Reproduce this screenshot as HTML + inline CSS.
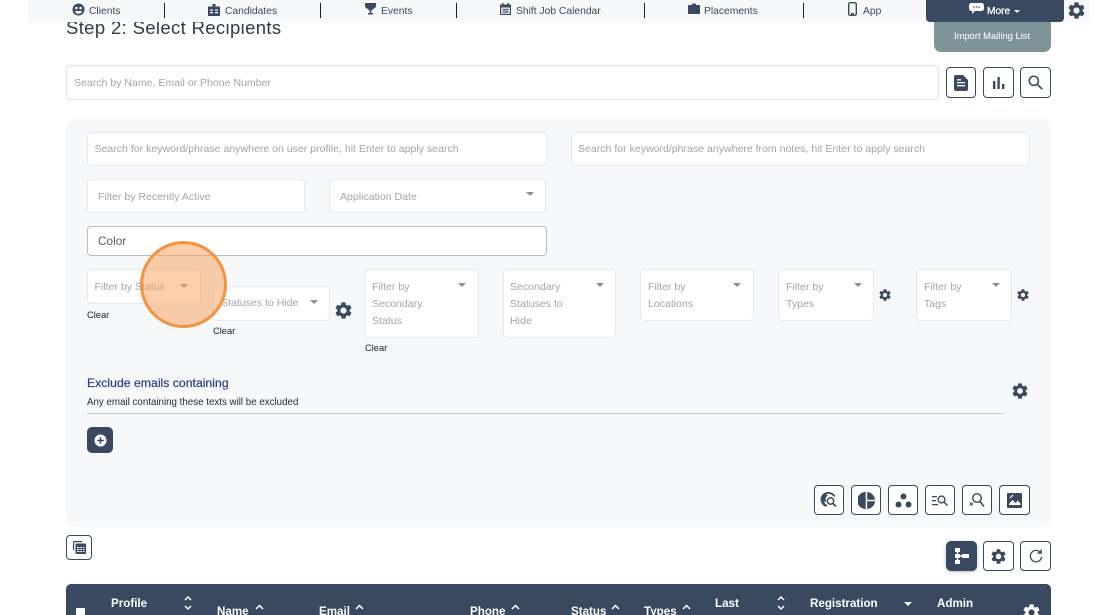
<!DOCTYPE html>
<html><head><meta charset="utf-8">
<style>
*{box-sizing:border-box}
html,body{margin:0;padding:0;background:#fff;width:1100px;height:615px;overflow:hidden}
body{position:relative;font-family:"Liberation Sans",sans-serif;color:#39495f}
.a{position:absolute}
.t{position:absolute;white-space:nowrap;line-height:14px}
.in{position:absolute;background:#fff;border:1px solid #e6e9ee;border-radius:4px}
.p{color:#a0a4a9;font-size:10.55px}
.btn{position:absolute;background:#fff;border:1px solid #39495f;border-radius:4px;display:flex;align-items:center;justify-content:center}
.caret{position:absolute;width:0;height:0;border-left:4.5px solid transparent;border-right:4.5px solid transparent;border-top:4.5px solid #8a8f96}
.sep{position:absolute;top:3px;width:1px;height:15px;background:#222}
.n{font-size:10.3px;color:#39495f;top:5px}
.c{font-size:9.3px;color:#222}
.h{font-size:11.6px;font-weight:bold;color:#fff}
svg{display:block}
</style></head><body>
<svg width="0" height="0" style="position:absolute"><defs>
<symbol id="g" viewBox="2 2 20 20"><path d="M19.14 12.94c.04-.3.06-.61.06-.94 0-.32-.02-.64-.07-.94l2.03-1.58a.49.49 0 0 0 .12-.61l-1.92-3.32a.488.488 0 0 0-.59-.22l-2.39.96c-.5-.38-1.03-.7-1.62-.94l-.36-2.54a.484.484 0 0 0-.48-.41h-3.84c-.24 0-.43.17-.47.41l-.36 2.54c-.59.24-1.13.57-1.62.94l-2.39-.96c-.22-.08-.47 0-.59.22L2.74 8.87c-.12.21-.08.47.12.61l2.03 1.58c-.05.3-.09.63-.09.94s.02.64.07.94l-2.03 1.58a.49.49 0 0 0-.12.61l1.92 3.32c.12.22.37.29.59.22l2.39-.96c.5.38 1.03.7 1.62.94l.36 2.54c.05.24.24.41.48.41h3.84c.24 0 .44-.17.47-.41l.36-2.54c.59-.24 1.13-.56 1.62-.94l2.39.96c.22.08.47 0 .59-.22l1.92-3.32c.12-.22.07-.47-.12-.61l-2.01-1.58zM12 15.6c-1.98 0-3.6-1.62-3.6-3.6s1.62-3.6 3.6-3.6 3.6 1.62 3.6 3.6-1.62 3.6-3.6 3.6z" fill="currentColor"/></symbol>
</defs></svg>

<div class="t" style="left:66px;top:17px;font-size:18.5px;line-height:22px;color:#2f3a47;letter-spacing:.35px">Step 2: Select Recipients</div>

<!-- nav -->
<div class="a" style="left:28px;top:0;width:1062px;height:22px;background:#f6f8fa"></div>
<svg class="a" style="left:72px;top:3px" width="13" height="13" viewBox="0 0 13 13"><circle cx="6.500" cy="6.500" r="6" fill="#39495f"/><circle cx="4.400" cy="5" r="1.300" fill="#f6f8fa"/><circle cx="8.600" cy="5" r="1.300" fill="#f6f8fa"/><path d="M3 8h7a3.600 3.600 0 0 1-7 0z" fill="#f6f8fa"/></svg>
<div class="t n" style="left:89px">Clients</div>
<div class="sep" style="left:164px"></div>
<svg class="a" style="left:208px;top:3px" width="12" height="13" viewBox="0 0 12 13"><path d="M0 3.500h4.500V1h3v2.500H12V13H0z" fill="#39495f"/><rect x="2" y="6.500" width="3" height="1.300" fill="#f6f8fa"/><rect x="7" y="6.500" width="3" height="1.300" fill="#f6f8fa"/><rect x="2" y="9" width="3" height="1.300" fill="#f6f8fa"/><rect x="7" y="9" width="3" height="1.300" fill="#f6f8fa"/></svg>
<div class="t n" style="left:225px">Candidates</div>
<div class="sep" style="left:320px"></div>
<svg class="a" style="left:365px;top:3px" width="11" height="12" viewBox="0 0 11 12"><path d="M0 0h11v2.500C11 4.500 9.500 5.500 8 6 7.500 7 6.500 7.500 6.200 7.800V10H8v1.500H3V10h1.800V7.800C4.500 7.500 3.500 7 3 6 1.500 5.500 0 4.500 0 2.500z" fill="#39495f"/></svg>
<div class="t n" style="left:381px">Events</div>
<div class="sep" style="left:456px"></div>
<svg class="a" style="left:500px;top:3px" width="11" height="12" viewBox="0 0 11 12"><path d="M0 1.500h2V0h1.500v1.500h4V0H9v1.500h2V12H0z" fill="#39495f"/><rect x="1.200" y="4.500" width="8.600" height="6.300" fill="#f6f8fa"/><path d="M2.500 5.800h6v1h-6zM2.500 7.500h6v1h-6zM2.500 9.100h6v.8h-6z" fill="#39495f"/></svg>
<div class="t n" style="left:516px">Shift Job Calendar</div>
<div class="sep" style="left:644px"></div>
<svg class="a" style="left:688px;top:3px" width="12" height="11" viewBox="0 0 12 11"><path d="M1 2h3V.6h4V2h3a1 1 0 0 1 1 1v7a1 1 0 0 1-1 1H1a1 1 0 0 1-1-1V3a1 1 0 0 1 1-1z" fill="#39495f"/></svg>
<div class="t n" style="left:704px">Placements</div>
<div class="sep" style="left:803px"></div>
<svg class="a" style="left:848px;top:2px" width="9" height="14" viewBox="0 0 9 14"><rect x=".7" y=".7" width="7.600" height="12.600" rx="1.500" fill="none" stroke="#39495f" stroke-width="1.400"/><rect x="3" y="11" width="3" height="1.500" fill="#39495f"/></svg>
<div class="t n" style="left:863px">App</div>

<div class="a" style="left:934px;top:20px;width:117px;height:32px;background:#7f9498;border-radius:0 0 7px 7px"></div>
<div class="t" style="left:954px;top:29px;font-size:9.400px;color:#fff">Import Mailing List</div>
<div class="a" style="left:926px;top:0;width:138px;height:22px;background:#39495f;border-radius:0 0 4px 4px"></div>
<svg class="a" style="left:969px;top:3px" width="15" height="11" viewBox="0 0 15 11"><path d="M2.500 0h10A2.500 2.500 0 0 1 15 2.500v3A2.500 2.500 0 0 1 12.500 8H6l-3 3V8h-.5A2.500 2.500 0 0 1 0 5.500v-3A2.500 2.500 0 0 1 2.500 0z" fill="#fff"/><circle cx="5" cy="4" r=".8" fill="#39495f"/><circle cx="7.500" cy="4" r=".8" fill="#39495f"/><circle cx="10" cy="4" r=".8" fill="#39495f"/></svg>
<div class="t" style="left:987px;top:5px;font-size:10.200px;color:#fff;-webkit-text-stroke:.25px #fff">More</div>
<div class="caret" style="left:1014px;top:10px;border-top-color:#fff;border-left-width:3px;border-right-width:3px;border-top-width:3px"></div>
<svg class="a" style="left:1068px;top:2px;color:#39495f" width="17" height="17"><use href="#g"/></svg>

<!-- search -->
<div class="in" style="left:66px;top:65px;width:873px;height:35px;border-color:#dfe2e6"></div>
<div class="t p" style="left:74px;top:76px">Search by Name, Email or Phone Number</div>
<div class="btn" style="left:946px;top:67px;width:30px;height:31px"><svg width="14" height="16" viewBox="0 0 14 16"><path d="M2 0h7l5 5v9a2 2 0 0 1-2 2H2a2 2 0 0 1-2-2V2a2 2 0 0 1 2-2z" fill="#39495f"/><path d="M3 7h8v1.400H3zM3 10h8v1.400H3zM3 4.200h4v1.300H3z" fill="#fff"/></svg></div>
<div class="btn" style="left:983px;top:67px;width:31px;height:31px"><svg width="12" height="12" viewBox="0 0 12 12"><path d="M0 4h2.400v8H0zM4.400 0h2.400v12H4.400zM9 7h2.400v5H9z" fill="#39495f"/></svg></div>
<div class="btn" style="left:1020px;top:67px;width:31px;height:31px"><svg width="15" height="15" viewBox="0 0 15 15"><circle cx="5.800" cy="5.800" r="4.600" fill="none" stroke="#39495f" stroke-width="1.500"/><path d="M9.200 9.200l5 5" stroke="#39495f" stroke-width="1.700"/></svg></div>

<!-- panel -->
<div class="a" style="left:66px;top:119px;width:985px;height:408px;background:#f6f8fa;border-radius:10px"></div>
<div class="in" style="left:87px;top:132px;width:460px;height:34px"></div>
<div class="t p" style="left:94.500px;top:142px">Search for keyword/phrase anywhere on user profile, hit Enter to apply search</div>
<div class="in" style="left:571px;top:132px;width:459px;height:34px"></div>
<div class="t p" style="left:578px;top:142px">Search for keyword/phrase anywhere from notes, hit Enter to apply search</div>
<div class="in" style="left:87px;top:179px;width:218px;height:34px"></div>
<div class="t p" style="left:98px;top:190px">Filter by Recently Active</div>
<div class="in" style="left:329px;top:179px;width:217px;height:34px"></div>
<div class="t p" style="left:340px;top:190px">Application Date</div>
<div class="caret" style="left:526px;top:192px"></div>
<div class="in" style="left:87px;top:226px;width:460px;height:30px;border-color:#b9bec6"></div>
<div class="t" style="left:98px;top:234px;font-size:11.800px;color:#555c66">Color</div>

<div class="in" style="left:87px;top:269px;width:114px;height:35px"></div>
<div class="t p" style="left:94.500px;top:280px">Filter by Status</div>
<div class="caret" style="left:180px;top:284px"></div>
<div class="t c" style="left:87px;top:307.500px">Clear</div>

<div class="in" style="left:213px;top:286px;width:117px;height:35px"></div>
<div class="t p" style="left:221px;top:296px">Statuses to Hide</div>
<div class="caret" style="left:310px;top:300px"></div>
<div class="t c" style="left:213px;top:323.500px">Clear</div>
<svg class="a" style="left:335px;top:302px;color:#39495f" width="17" height="17"><use href="#g"/></svg>

<div class="in" style="left:365px;top:269px;width:114px;height:69px"></div>
<div class="t p" style="left:372px;top:279px;line-height:17px">Filter by<br>Secondary<br>Status</div>
<div class="caret" style="left:458px;top:283px"></div>
<div class="t c" style="left:365px;top:340.500px">Clear</div>

<div class="in" style="left:503px;top:269px;width:113px;height:69px"></div>
<div class="t p" style="left:510px;top:279px;line-height:17px">Secondary<br>Statuses to<br>Hide</div>
<div class="caret" style="left:596px;top:283px"></div>

<div class="in" style="left:640px;top:269px;width:114px;height:52px"></div>
<div class="t p" style="left:648px;top:279px;line-height:17px">Filter by<br>Locations</div>
<div class="caret" style="left:733px;top:283px"></div>

<div class="in" style="left:778px;top:269px;width:96px;height:52px"></div>
<div class="t p" style="left:786px;top:279px;line-height:17px">Filter by<br>Types</div>
<div class="caret" style="left:854px;top:283px"></div>
<svg class="a" style="left:879px;top:289px;color:#39495f" width="12" height="12"><use href="#g"/></svg>

<div class="in" style="left:916px;top:269px;width:96px;height:52px"></div>
<div class="t p" style="left:924px;top:279px;line-height:17px">Filter by<br>Tags</div>
<div class="caret" style="left:992px;top:283px"></div>
<svg class="a" style="left:1017px;top:289px;color:#39495f" width="12" height="12"><use href="#g"/></svg>

<div class="t" style="left:87px;top:376px;font-size:12.250px;color:#2b3f86;-webkit-text-stroke:.2px #2b3f86">Exclude emails containing</div>
<div class="t" style="left:87px;top:396px;font-size:9.750px;color:#2a2f36">Any email containing these texts will be excluded</div>
<div class="a" style="left:87px;top:413px;width:917px;height:1px;background:#c4c8ce"></div>
<svg class="a" style="left:1012px;top:383px;color:#39495f" width="16" height="16"><use href="#g"/></svg>
<div class="a" style="left:87px;top:427px;width:26px;height:26px;border-radius:5px;background:#39495f;display:flex;align-items:center;justify-content:center"><svg width="13" height="13" viewBox="0 0 13 13"><circle cx="6.500" cy="6.500" r="6" fill="#fff"/><path d="M6.500 3.200v6.600M3.200 6.500h6.600" stroke="#39495f" stroke-width="1.500"/></svg></div>

<!-- bottom icon row -->
<div class="btn" style="left:814px;top:485px;width:30px;height:30px"><svg width="18" height="18" viewBox="0 0 18 18"><path d="M8 1a7.500 7.500 0 0 0-2 14.700l1.500-1.500A6 6 0 0 1 8 2.800c2.600 0 4.500 1.200 6 3.200l1.300-1A8 8 0 0 0 8 1z" fill="#39495f"/><path d="M2.500 5.500C4 4 6 3.500 8 4l-2.500 3 .5 4.500-3-2z" fill="#39495f"/><circle cx="10.500" cy="10" r="3.200" fill="none" stroke="#39495f" stroke-width="1.500"/><path d="M13 12.500l3 3" stroke="#39495f" stroke-width="1.700"/></svg></div>
<div class="btn" style="left:851px;top:485px;width:30px;height:30px"><svg width="17" height="17" viewBox="0 0 17 17"><path d="M7.700 0v17A8.500 8.500 0 0 1 7.700 0z" fill="#39495f"/><path d="M9.200 0A8.500 8.500 0 0 1 17 7.700H9.200zM9.200 9.200H17A8.500 8.500 0 0 1 9.200 17z" fill="#39495f"/></svg></div>
<div class="btn" style="left:888px;top:485px;width:30px;height:30px"><svg width="17" height="15" viewBox="0 0 17 15"><circle cx="8.500" cy="3.500" r="3" fill="#39495f"/><circle cx="3.500" cy="11.500" r="3" fill="#39495f"/><circle cx="13.500" cy="11.500" r="3" fill="#39495f"/></svg></div>
<div class="btn" style="left:925px;top:485px;width:30px;height:30px"><svg width="16" height="11" viewBox="0 0 16 11"><path d="M0 1h5v1.200H0zM0 5h4v1.200H0zM0 9h6v1.200H0z" fill="#39495f"/><circle cx="9.500" cy="4.500" r="3.400" fill="none" stroke="#39495f" stroke-width="1.400"/><path d="M12 7l3.500 3.500" stroke="#39495f" stroke-width="1.500"/></svg></div>
<div class="btn" style="left:962px;top:485px;width:30px;height:30px"><svg width="16" height="16" viewBox="0 0 16 16"><circle cx="8" cy="6" r="4.300" fill="none" stroke="#39495f" stroke-width="1.400"/><path d="M11 9.500l4 5" stroke="#39495f" stroke-width="1.600"/><path d="M.8 10.500l3 3M3.800 10.500l-3 3" stroke="#39495f" stroke-width="1"/></svg></div>
<div class="btn" style="left:999px;top:485px;width:31px;height:30px"><svg width="15" height="15" viewBox="0 0 15 15"><path d="M1 0h13a1 1 0 0 1 1 1v13a1 1 0 0 1-1 1H1a1 1 0 0 1-1-1V1a1 1 0 0 1 1-1z" fill="#39495f"/><path d="M2 11l3.500-4 3 3 2.500-2.500 2.500 3.500v1H2z" fill="#fff"/><path d="M3 5l3-3" stroke="#fff" stroke-width="1.200"/></svg></div>

<!-- under panel -->
<div class="btn" style="left:66px;top:535px;width:26px;height:25px"><svg width="13" height="13" viewBox="0 0 13 13"><path d="M0 1.500A1.500 1.500 0 0 1 1.500 0H9v1.200H1.200V9H0z" fill="#39495f"/><rect x="2.500" y="2.500" width="10.500" height="10.500" rx="1" fill="#39495f"/><path d="M4 6h7.500v1H4zM4 8h7.500v1H4zM4 10h7.500v1H4z" fill="#fff"/><path d="M6.500 6h.8v5h-.8zM9 6h.8v5H9z" fill="#39495f"/></svg></div>
<div class="a" style="left:946px;top:541px;width:31px;height:30px;background:#39495f;border-radius:5px;box-shadow:0 1px 3px rgba(57,73,95,.35);display:flex;align-items:center;justify-content:center"><svg width="14" height="16" viewBox="0 0 14 16"><path d="M0 0h5v4H0zM0 6h5v4H0zM0 12h5v4H0zM1.800 4h1.400v8H1.800zM5 7.300h2v1.400H5zM7 6h7v4H7z" fill="#fff"/></svg></div>
<div class="btn" style="left:983px;top:541px;width:31px;height:30px"><svg style="color:#39495f" width="15" height="15"><use href="#g"/></svg></div>
<div class="btn" style="left:1020px;top:541px;width:31px;height:30px"><svg width="14" height="14" viewBox="0 0 14 14"><path d="M11.500 3.500A5.700 5.700 0 1 0 12.700 8" fill="none" stroke="#39495f" stroke-width="1.300"/><path d="M12.800 0v4.800H8z" fill="#39495f"/></svg></div>

<!-- table -->
<div class="a" style="left:66px;top:584px;width:985px;height:31px;background:#39495f;border-radius:5px 5px 0 0"></div>
<div class="a" style="left:76px;top:608px;width:9px;height:9px;background:#fff;border-radius:1px"></div>
<div class="t h" style="left:111px;top:597px">Profile</div>
<div class="t h" style="left:217px;top:605px">Name</div>
<div class="t h" style="left:319px;top:605px">Email</div>
<div class="t h" style="left:470px;top:605px">Phone</div>
<div class="t h" style="left:571px;top:605px">Status</div>
<div class="t h" style="left:644px;top:605px">Types</div>
<div class="t h" style="left:715px;top:597px">Last</div>
<div class="t h" style="left:810px;top:597px">Registration</div>
<div class="t h" style="left:937px;top:597px">Admin</div>
<svg class="a" style="left:0;top:0" width="1100" height="615" fill="none" stroke="#fff" stroke-width="1.500">
<path d="M185 600l3-3 3 3M185 606l3 3 3-3"/>
<path d="M256 609l3.500-3.500 3.500 3.500M356 609l3.500-3.500 3.500 3.500M512 609l3.500-3.500 3.500 3.500M612 609l3.500-3.500 3.500 3.500M683 609l3.500-3.500 3.500 3.500"/>
<path d="M778 600l3-3 3 3M778 606l3 3 3-3"/>
</svg>
<div class="caret" style="left:904px;top:602px;border-top-color:#fff;border-left-width:4px;border-right-width:4px;border-top-width:4px"></div>
<svg class="a" style="left:1023px;top:604px;color:#fff" width="17" height="17"><use href="#g"/></svg>

<!-- highlight -->
<div class="a" style="left:140px;top:241px;width:87px;height:87px;border-radius:50%;background:rgba(250,165,100,.55);border:3.500px solid #f59340"></div>
</body></html>
